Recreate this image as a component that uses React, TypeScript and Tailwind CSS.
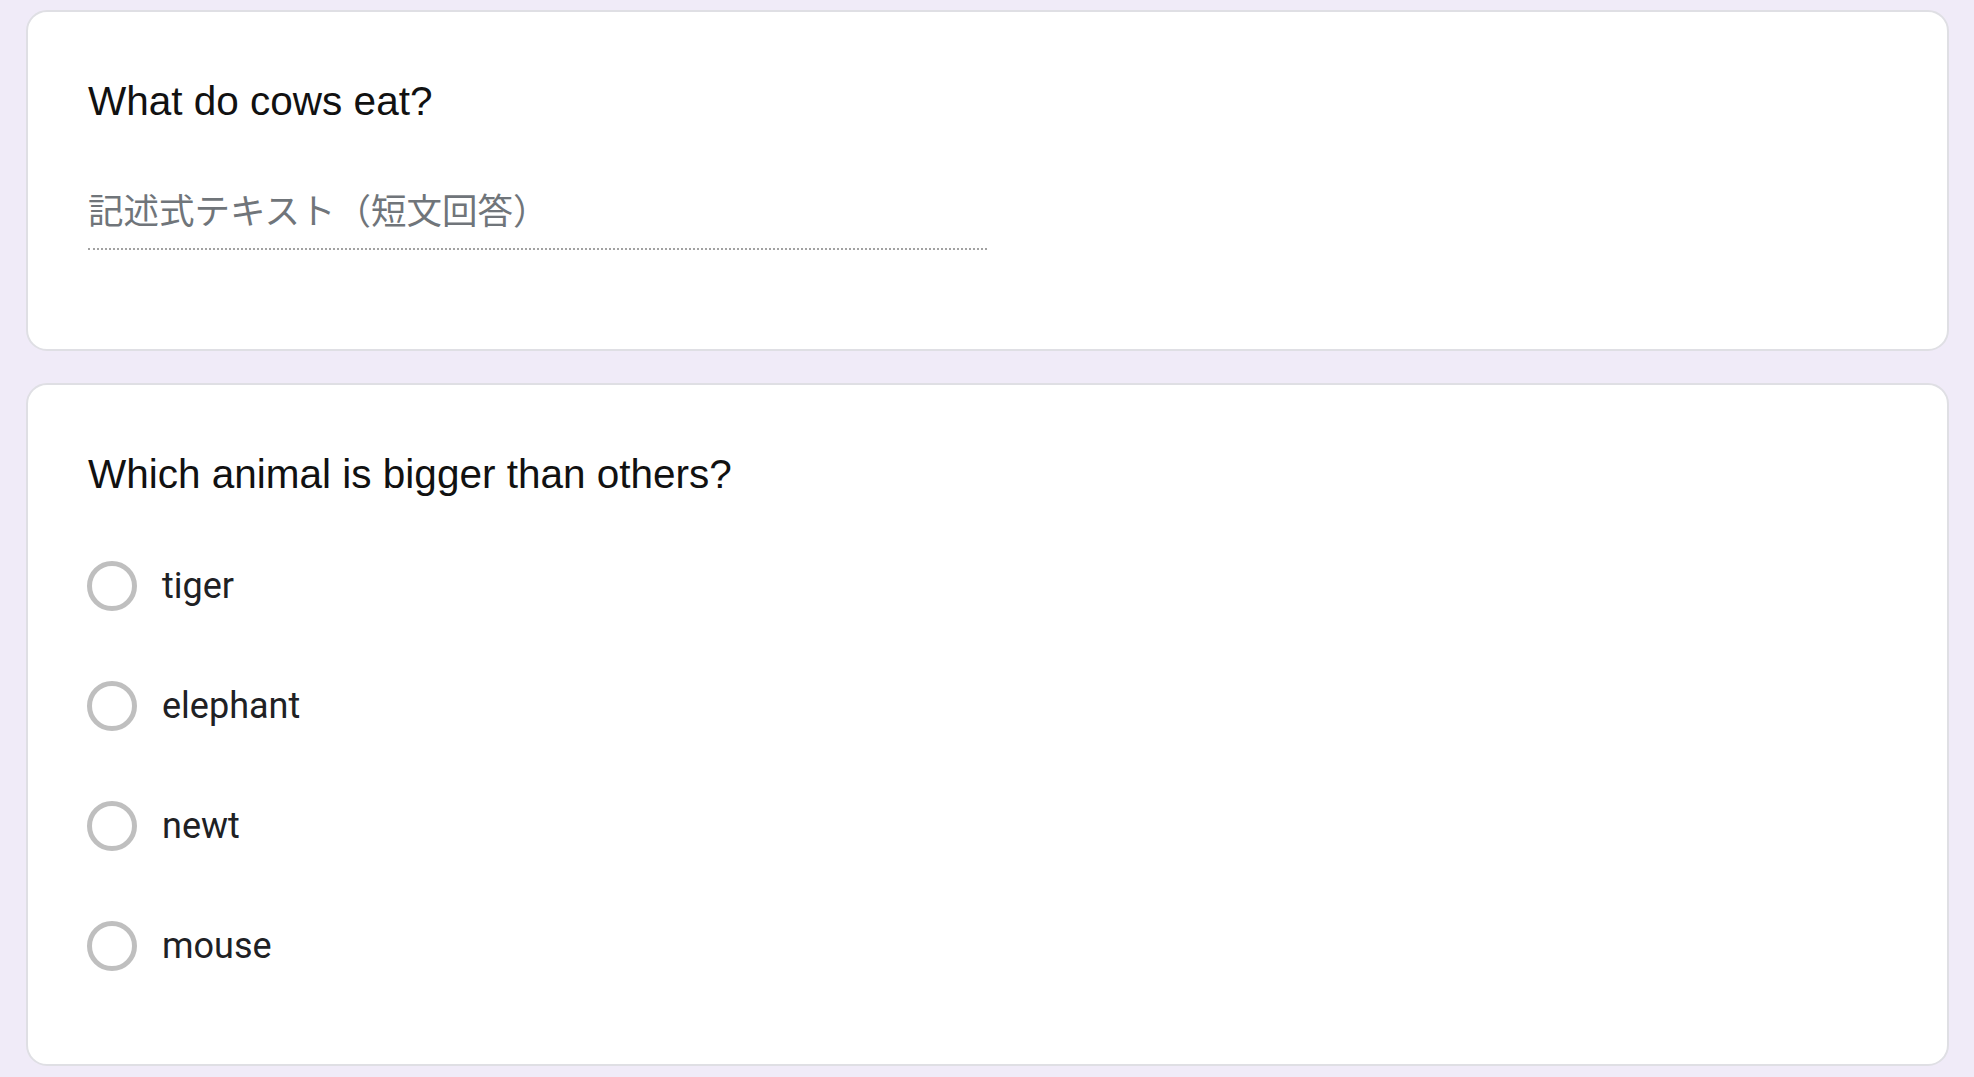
const options = ["tiger", "elephant", "newt", "mouse"];

function Card({ children, className }: { children: React.ReactNode; className?: string }) {
  return (
    <div className={"bg-white border-2 border-[#dfdfe4] rounded-[21px] pl-[60px] pr-[61px] " + (className ?? "")}>
      {children}
    </div>
  );
}

function QuestionTitle({ text }: { text: string }) {
  return (
    <h2 className="text-[40.5px] leading-[48px] text-[#111] font-['Liberation_Sans',Arial,sans-serif] font-normal">
      {text}
    </h2>
  );
}

export default function App() {
  return (
    <div className="min-h-screen bg-[#f0ebf8] pt-[10px] pl-[26px] pr-[25px] pb-[11px]">
      <div className="flex flex-col gap-[32px]">
        {/* Short answer question */}
        <Card className="h-[341px] pt-[65px]">
          <QuestionTitle text="What do cows eat?" />
          <div className="mt-[67px] w-1/2 border-b-2 border-dotted border-[#a2a2a2] pb-[16px]">
            <span className="block text-[35.5px] leading-[40px] text-[#70757a] font-['Roboto','Noto_Sans_CJK_JP',sans-serif]">
              記述式テキスト（短文回答）
            </span>
          </div>
        </Card>

        {/* Multiple choice question */}
        <Card className="h-[683px] pt-[65px]">
          <QuestionTitle text="Which animal is bigger than others?" />
          <div className="mt-[63px] flex flex-col gap-[70px]">
            {options.map((opt) => (
              <label key={opt} className="flex items-center h-[50px] -ml-[1px]">
                <span className="w-[50px] h-[50px] rounded-full border-[5px] border-[#bfbfbf] shrink-0" />
                <span className="ml-[25px] text-[36px] leading-[50px] text-[#202124] font-['Roboto',sans-serif]">
                  {opt}
                </span>
              </label>
            ))}
          </div>
        </Card>
      </div>
    </div>
  );
}
